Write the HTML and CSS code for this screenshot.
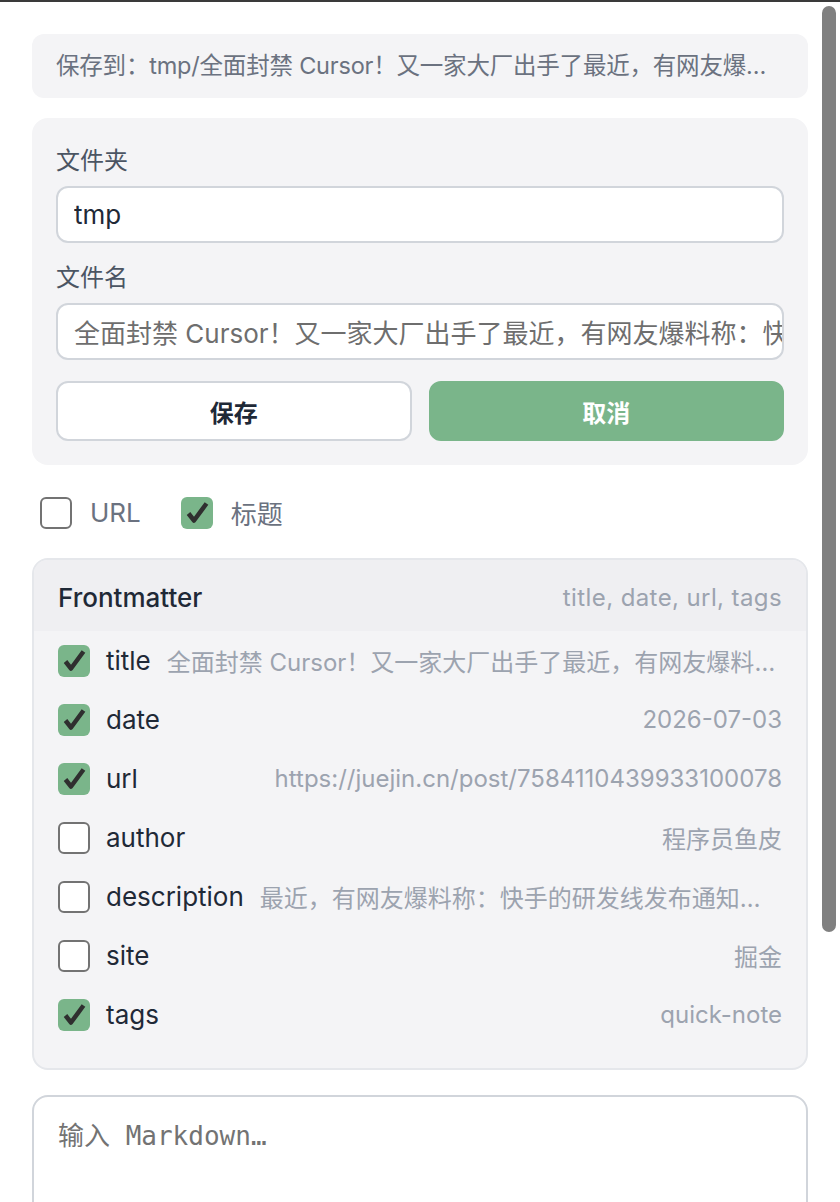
FILE: index.html
```html
<!DOCTYPE html>
<html lang="zh-CN">
<head>
  <meta charset="UTF-8" />
  <meta name="viewport" content="width=device-width, initial-scale=1.0"/>
  <title>保存到 Obsidian</title>
  <link rel="stylesheet" href="styles.css">
</head>
<body>

  <div class="scrollbar"></div>

  <main class="panel">
    <div class="save-path">保存到：tmp/全面封禁 Cursor！又一家大厂出手了最近，有网友爆料称：快手的研发线发布通知</div>

    <section class="form-card">
      <div class="field">
        <label class="field-label">文件夹</label>
        <input class="text-input" type="text" value="tmp">
      </div>
      <div class="field">
        <label class="field-label">文件名</label>
        <input class="text-input muted" type="text" value="全面封禁 Cursor！又一家大厂出手了最近，有网友爆料称：快手的研发线发布通知">
      </div>
      <div class="actions">
        <button class="btn">保存</button>
        <button class="btn btn-primary">取消</button>
      </div>
    </section>

    <div class="options">
      <label class="option">
        <span class="box"></span>
        URL
      </label>
      <label class="option">
        <span class="box checked"><svg viewBox="0 0 32 32"><path d="M7.5 16.5 L13 23.5 L25.5 6.5"/></svg></span>
        标题
      </label>
    </div>

    <section class="frontmatter">
      <div class="fm-header">
        <span class="fm-title">Frontmatter</span>
        <span class="fm-summary">title, date, url, tags</span>
      </div>
      <ul class="fm-list">
        <li class="fm-row">
          <span class="box checked"><svg viewBox="0 0 32 32"><path d="M7.5 16.5 L13 23.5 L25.5 6.5"/></svg></span>
          <span class="fm-key">title</span>
          <span class="fm-value">全面封禁 Cursor！又一家大厂出手了最近，有网友爆料称：快手的研发线发布通知</span>
        </li>
        <li class="fm-row">
          <span class="box checked"><svg viewBox="0 0 32 32"><path d="M7.5 16.5 L13 23.5 L25.5 6.5"/></svg></span>
          <span class="fm-key">date</span>
          <span class="fm-value">2026-07-03</span>
        </li>
        <li class="fm-row">
          <span class="box checked"><svg viewBox="0 0 32 32"><path d="M7.5 16.5 L13 23.5 L25.5 6.5"/></svg></span>
          <span class="fm-key">url</span>
          <span class="fm-value">https://juejin.cn/post/7584110439933100078</span>
        </li>
        <li class="fm-row">
          <span class="box"></span>
          <span class="fm-key">author</span>
          <span class="fm-value">程序员鱼皮</span>
        </li>
        <li class="fm-row">
          <span class="box"></span>
          <span class="fm-key">description</span>
          <span class="fm-value">最近，有网友爆料称：快手的研发线发布通知，要求全面禁用 Cursor 等海外 AI 编程工具</span>
        </li>
        <li class="fm-row">
          <span class="box"></span>
          <span class="fm-key">site</span>
          <span class="fm-value">掘金</span>
        </li>
        <li class="fm-row">
          <span class="box checked"><svg viewBox="0 0 32 32"><path d="M7.5 16.5 L13 23.5 L25.5 6.5"/></svg></span>
          <span class="fm-key">tags</span>
          <span class="fm-value">quick-note</span>
        </li>
      </ul>
    </section>

    <textarea class="editor" placeholder="输入 Markdown…"></textarea>
  </main>

</body>
</html>
```

FILE: styles.css
```css
html, body {
  height: 100%;
}

body {
  margin: 0;
  box-sizing: border-box;
  border-top: 2px solid #3a3a3a;
  background: #fff;
  color: #1f2937;
  font-family: Inter, "Noto Sans CJK SC", sans-serif;
  overflow: hidden;
}

.scrollbar {
  position: fixed;
  top: 6px;
  right: 4px;
  width: 14px;
  height: 926px;
  background: #808080;
  border-radius: 7px;
  z-index: 10;
}

.panel {
  display: flex;
  flex-direction: column;
  gap: 20px;
  padding: 32px 32px 0;
}

.save-path {
  height: 64px;
  line-height: 64px;
  padding: 0 24px;
  background: #f4f4f6;
  border-radius: 12px;
  color: #6b7280;
  font-size: 23.5px;
  letter-spacing: -0.2px;
  white-space: nowrap;
  overflow: hidden;
  text-overflow: ellipsis;
}

/* folder / filename card */
.form-card {
  display: flex;
  flex-direction: column;
  gap: 18px;
  padding: 26px 24px 24px;
  background: #f4f4f6;
  border-radius: 16px;
}

.field {
  display: flex;
  flex-direction: column;
}

.field-label {
  line-height: 34px;
  margin-bottom: 8px;
  font-size: 24px;
  color: #4b5563;
}

.text-input {
  box-sizing: border-box;
  height: 57px;
  padding: 0 0 0 16px;
  border: 2px solid #d1d5db;
  border-radius: 12px;
  background: #fff;
  color: #1f2937;
  font: inherit;
  font-size: 26px;
  outline: none;
}

.text-input.muted {
  color: #6e6e6e;
}

.actions {
  display: grid;
  grid-template-columns: 1fr 1fr;
  gap: 17px;
  margin-top: 3px;
}

.btn {
  height: 60px;
  border: 2px solid #d1d5db;
  border-radius: 12px;
  background: #fff;
  color: #1f2937;
  font: inherit;
  font-size: 24px;
  font-weight: 700;
  cursor: pointer;
}

.btn-primary {
  border-color: #7ab58a;
  background: #7ab58a;
  color: #fff;
}

/* checkboxes */
.box {
  box-sizing: border-box;
  flex: none;
  width: 32px;
  height: 32px;
  border: 2px solid #737373;
  border-radius: 6px;
  background: #fff;
}

.box.checked {
  border: none;
  background: #7ab58a;
}

.box svg {
  display: block;
  width: 32px;
  height: 32px;
}

.box svg path {
  fill: none;
  stroke: #2f2f2f;
  stroke-width: 4.5;
  stroke-linejoin: round;
}

.options {
  display: flex;
  align-items: center;
  gap: 40px;
  height: 51px;
  padding: 2px 8px 0;
}

.option {
  display: flex;
  align-items: center;
  gap: 18px;
  color: #6b7280;
  font-size: 26px;
}

/* frontmatter */
.frontmatter {
  border: 2px solid #e5e7eb;
  border-radius: 16px;
  background: #f4f4f6;
  overflow: hidden;
}

.fm-header {
  box-sizing: border-box;
  display: flex;
  justify-content: space-between;
  align-items: center;
  height: 71px;
  padding: 3px 24px 0;
  background: #efeff2;
}

.fm-title {
  font-size: 26px;
  font-weight: 500;
  color: #1f2937;
}

.fm-summary {
  font-size: 24px;
  letter-spacing: 0.4px;
  color: #9ca3af;
}

.fm-list {
  list-style: none;
  margin: 0;
  padding: 0 24px 24px;
}

.fm-row {
  display: flex;
  align-items: center;
  gap: 16px;
  height: 59px;
}

.fm-key {
  flex: none;
  font-size: 26px;
  color: #1f2937;
}

.fm-value {
  flex: 1;
  min-width: 0;
  text-align: right;
  font-size: 24px;
  color: #9ca3af;
  white-space: nowrap;
  overflow: hidden;
  text-overflow: ellipsis;
}

.editor {
  box-sizing: border-box;
  height: 240px;
  margin-top: 5px;
  padding: 20px 24px;
  border: 2px solid #d1d5db;
  border-radius: 16px;
  font-family: "DejaVu Sans Mono", "Noto Sans CJK SC", monospace;
  font-size: 26px;
  line-height: 1.5;
  resize: none;
  outline: none;
}

.editor::placeholder {
  color: #737373;
}
```
